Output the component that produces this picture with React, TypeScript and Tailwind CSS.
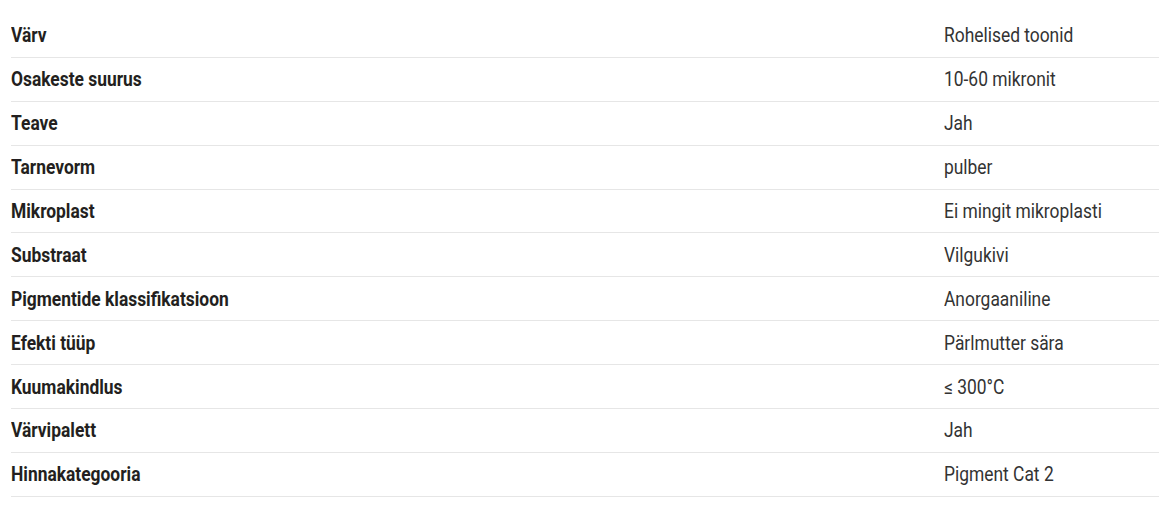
const rows: [string, string][] = [
  ['Värv', 'Rohelised toonid'],
  ['Osakeste suurus', '10-60 mikronit'],
  ['Teave', 'Jah'],
  ['Tarnevorm', 'pulber'],
  ['Mikroplast', 'Ei mingit mikroplasti'],
  ['Substraat', 'Vilgukivi'],
  ['Pigmentide klassifikatsioon', 'Anorgaaniline'],
  ['Efekti tüüp', 'Pärlmutter sära'],
  ['Kuumakindlus', '≤ 300°C'],
  ['Värvipalett', 'Jah'],
  ['Hinnakategooria', 'Pigment Cat 2'],
];

export default function App() {
  return (
    <div className="bg-white w-[1159px] h-[520px] pt-[14px] pl-[11px] font-['Roboto',sans-serif] text-[20px] leading-none">
      {rows.map(([label, value]) => (
        <div key={label} className="grid grid-cols-[933px_1fr] h-[43.9px] items-center border-b border-[#e6e6e6]">
          <span className="font-bold text-[#231f20] origin-left scale-x-[0.87] whitespace-nowrap">{label}</span>
          <span className="text-[#333333] origin-left scale-x-[0.87] whitespace-nowrap">{value}</span>
        </div>
      ))}
    </div>
  );
}
